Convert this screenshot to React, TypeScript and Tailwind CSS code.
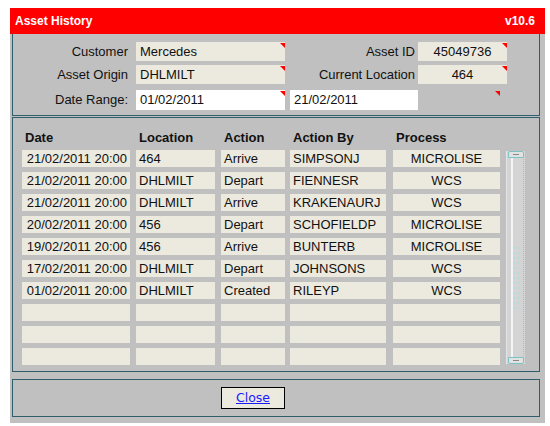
import type { ReactNode } from 'react'

const FIELD = 'bg-[#ece9df]'
const BORDER = 'border border-[#2f5d6b]'

const rows: [string, string, string, string, string][] = [
  ['21/02/2011 20:00', '464', 'Arrive', 'SIMPSONJ', 'MICROLISE'],
  ['21/02/2011 20:00', 'DHLMILT', 'Depart', 'FIENNESR', 'WCS'],
  ['21/02/2011 20:00', 'DHLMILT', 'Arrive', 'KRAKENAURJ', 'WCS'],
  ['20/02/2011 20:00', '456', 'Depart', 'SCHOFIELDP', 'MICROLISE'],
  ['19/02/2011 20:00', '456', 'Arrive', 'BUNTERB', 'MICROLISE'],
  ['17/02/2011 20:00', 'DHLMILT', 'Depart', 'JOHNSONS', 'WCS'],
  ['01/02/2011 20:00', 'DHLMILT', 'Created', 'RILEYP', 'WCS'],
  ['', '', '', '', ''],
  ['', '', '', '', ''],
  ['', '', '', '', ''],
]

function Flag() {
  return (
    <div className="absolute top-[1px] right-0 w-0 h-0 border-l-[5px] border-l-transparent border-t-[5px] border-t-[#ff0000]" />
  )
}

function Field({ w, h, white, center, children }: { w: string; h: string; white?: boolean; center?: boolean; children?: ReactNode }) {
  return (
    <div
      className={`relative ${w} ${h} ${white ? 'bg-white' : FIELD} flex items-center ${center ? 'justify-center' : 'pl-[4px]'}`}
    >
      {children}
      <Flag />
    </div>
  )
}

function Scrollbar() {
  return (
    <div className="ml-[6px] mt-[1px] w-[19px] h-[213px] bg-[#d4d4d4] border-l border-[#e4e4e4] flex flex-col relative">
      <div className="absolute left-[4px] top-0 bottom-0 w-[2px] bg-[#f4f4f4]" />
      <div className="absolute right-[1px] top-[4px] bottom-[4px] border-r border-dotted border-[#8fc8c8]" />
      <div className="relative h-[7px] mx-[1px] border border-[#7bc4c4] bg-[#e2e2e2] rounded-t-[2px] flex items-center justify-center">
        <div className="w-[6px] h-[1px] bg-[#888]" />
      </div>
      <div className="flex-1 flex items-center justify-center">
        <div className="grid grid-cols-2 gap-x-[2px] gap-y-[3px] mt-[40px]">
          {Array.from({ length: 26 }, (_, i) => (
            <div key={i} className="w-[3px] h-[2px] bg-[#b8dcdc]" />
          ))}
        </div>
      </div>
      <div className="relative h-[7px] mx-[1px] border border-[#7bc4c4] bg-[#e2e2e2] rounded-b-[2px] flex items-center justify-center">
        <div className="w-[6px] h-[1px] bg-[#888]" />
      </div>
    </div>
  )
}

const cols = [
  { w: 'w-[108px]', ml: '', align: 'justify-end pr-[3px]' },
  { w: 'w-[79px]', ml: 'ml-[6px]', align: 'pl-[3px]' },
  { w: 'w-[64px]', ml: 'ml-[6px]', align: 'pl-[3px]' },
  { w: 'w-[96px]', ml: 'ml-[5px]', align: 'pl-[3px]' },
  { w: 'w-[107px]', ml: 'ml-[7px]', align: 'justify-center' },
]

const headers = ['Date', 'Location', 'Action', 'Action By', 'Process']

export default function App() {
  return (
    <div className="w-[550px] h-[426px] bg-white pt-[8px] pl-[10px] text-[13px] text-[#111] font-['Liberation_Sans',Arial,sans-serif]">
      <div className="w-[535px]">
        <div className="h-[26px] bg-[#ff0000] flex items-center justify-between pl-[5px] pr-[10px] text-white font-bold text-[12px]">
          <span>Asset History</span>
          <span>v10.6</span>
        </div>

        <div className="bg-[#c0c0c0] pl-[2px] pb-[6px]">
          <div className={`w-[528px] ${BORDER} border-t-0 pt-[8px] pb-[5px]`}>
            <div className="flex h-[19px]">
              <div className="w-[115px] text-right leading-[19px]">Customer</div>
              <div className="ml-[8px]"><Field w="w-[149px]" h="h-[19px]">Mercedes</Field></div>
              <div className="w-[130px] text-right leading-[19px]">Asset ID</div>
              <div className="ml-[3px]"><Field w="w-[89px]" h="h-[19px]" center>45049736</Field></div>
            </div>
            <div className="flex h-[19px] mt-[4px]">
              <div className="w-[115px] text-right leading-[19px]">Asset Origin</div>
              <div className="ml-[8px]"><Field w="w-[149px]" h="h-[19px]">DHLMILT</Field></div>
              <div className="w-[130px] text-right leading-[19px]">Current Location</div>
              <div className="ml-[3px]"><Field w="w-[89px]" h="h-[19px]" center>464</Field></div>
            </div>
            <div className="flex h-[20px] mt-[6px]">
              <div className="w-[115px] text-right leading-[20px]">Date Range:</div>
              <div className="ml-[8px]"><Field w="w-[149px]" h="h-[20px]" white>01/02/2011</Field></div>
              <div className="ml-[5px] w-[128px] h-[20px] bg-white flex items-center pl-[4px]">21/02/2011</div>
              <div className="relative ml-[77px] w-[5px] h-[6px]"><Flag /></div>
            </div>
          </div>

          <div className={`w-[528px] ${BORDER} mt-[1px] pl-[9px] pb-[6px]`}>
            <div className="flex pt-[12px] h-[28px] leading-[16px] font-bold">
              {headers.map((h, i) => (
                <div key={h} className={`${cols[i].w} ${cols[i].ml} pl-[3px]`}>
                  {h}
                </div>
              ))}
            </div>
            <div className="flex mt-[4px]">
              <div className="flex flex-col gap-[5px]">
                {rows.map((r, ri) => (
                  <div key={ri} className="flex h-[17px]">
                    {r.map((c, ci) => (
                      <div
                        key={ci}
                        className={`${cols[ci].w} ${cols[ci].ml} ${FIELD} flex items-center leading-[17px] ${cols[ci].align}`}
                      >
                        {c}
                      </div>
                    ))}
                  </div>
                ))}
              </div>
              <Scrollbar />
            </div>
          </div>

          <div className={`w-[528px] ${BORDER} mt-[7px] pt-[7px] pb-[7px] pl-[208px]`}>
            <div className="w-[64px] h-[22px] bg-[#ece9df] border border-black flex items-center justify-center">
              <span className="text-[#1a1aff] underline font-['DejaVu_Sans',Verdana,sans-serif] text-[12.5px]">Close</span>
            </div>
          </div>
        </div>
      </div>
    </div>
  )
}
